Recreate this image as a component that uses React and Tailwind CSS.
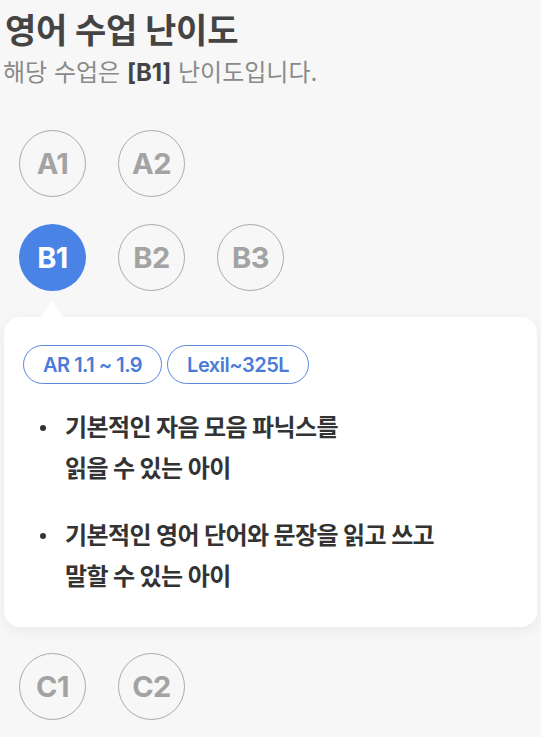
import React from "react";

const FONT = { fontFamily: 'Inter, "Noto Sans CJK KR", sans-serif' };

function Level({ label, active }) {
  return (
    <div
      className={
        "w-[67px] h-[67px] rounded-full flex items-center justify-center text-[29px] font-bold tracking-[-0.5px] " +
        (active
          ? "bg-[#4a83e6] text-white"
          : "border-[1.5px] border-[#ababab] text-[#a3a3a3]")
      }
    >
      {label}
    </div>
  );
}

function Tag({ children }) {
  return (
    <div className="h-[39px] px-[19px] rounded-full border-[1.5px] border-[#5b88dc] text-[#4a7bd8] text-[20px] font-semibold tracking-[-0.5px] flex items-center">
      {children}
    </div>
  );
}

function Bullet({ lines }) {
  return (
    <li className="flex">
      <span className="w-[61px] shrink-0 flex justify-end pr-[19px] pt-[18px]">
        <span className="block w-[6px] h-[6px] rounded-full bg-[#333]" />
      </span>
      <div className="text-[24px] leading-[41px] font-bold text-[#333] tracking-[-0.6px]">
        {lines.map((l, i) => (
          <div key={i}>{l}</div>
        ))}
      </div>
    </li>
  );
}

export default function App() {
  return (
    <div className="w-[541px] h-[737px] bg-[#f7f7f7] overflow-hidden" style={FONT}>
      <div className="pt-[10px] pl-[5px]">
        <h1 className="text-[34px] leading-[42px] font-bold text-[#444] tracking-[-0.2px]">영어 수업 난이도</h1>
        <p className="mt-[5px] text-[24px] leading-[32px] text-[#8a8a8a] ml-[-2px]">
          해당 수업은 <span className="font-bold text-[#444]">[B1]</span> 난이도입니다.
        </p>
      </div>

      <div className="mt-[41px] pl-[19px] flex flex-col gap-[27px]">
        <div className="flex gap-[32px]">
          <Level label="A1" />
          <Level label="A2" />
        </div>
        <div className="flex gap-[32px]">
          <Level label="B1" active />
          <Level label="B2" />
          <Level label="B3" />
        </div>
      </div>

      <div className="relative mt-[26px] mx-[4px] bg-white rounded-[16px] shadow-[0_4px_14px_rgba(0,0,0,0.06)] pt-[28px] pb-[30px]">
        <svg
          className="absolute left-[36px] top-[-15px]"
          width="24"
          height="16"
          viewBox="0 0 24 16"
        >
          <path d="M0 16 L10 1.5 Q11 0 12 0 Q13 0 14 1.5 L24 16 Z" fill="#ffffff" />
        </svg>
        <div className="flex gap-[5px] pl-[19px]">
          <Tag>AR 1.1 ~ 1.9</Tag>
          <Tag>Lexil~325L</Tag>
        </div>
        <ul className="mt-[23px] flex flex-col gap-[26px]">
          <Bullet lines={["기본적인 자음 모음 파닉스를", "읽을 수 있는 아이"]} />
          <Bullet lines={["기본적인 영어 단어와 문장을 읽고 쓰고", "말할 수 있는 아이"]} />
        </ul>
      </div>

      <div className="mt-[26px] pl-[19px] flex gap-[32px]">
        <Level label="C1" />
        <Level label="C2" />
      </div>
    </div>
  );
}
